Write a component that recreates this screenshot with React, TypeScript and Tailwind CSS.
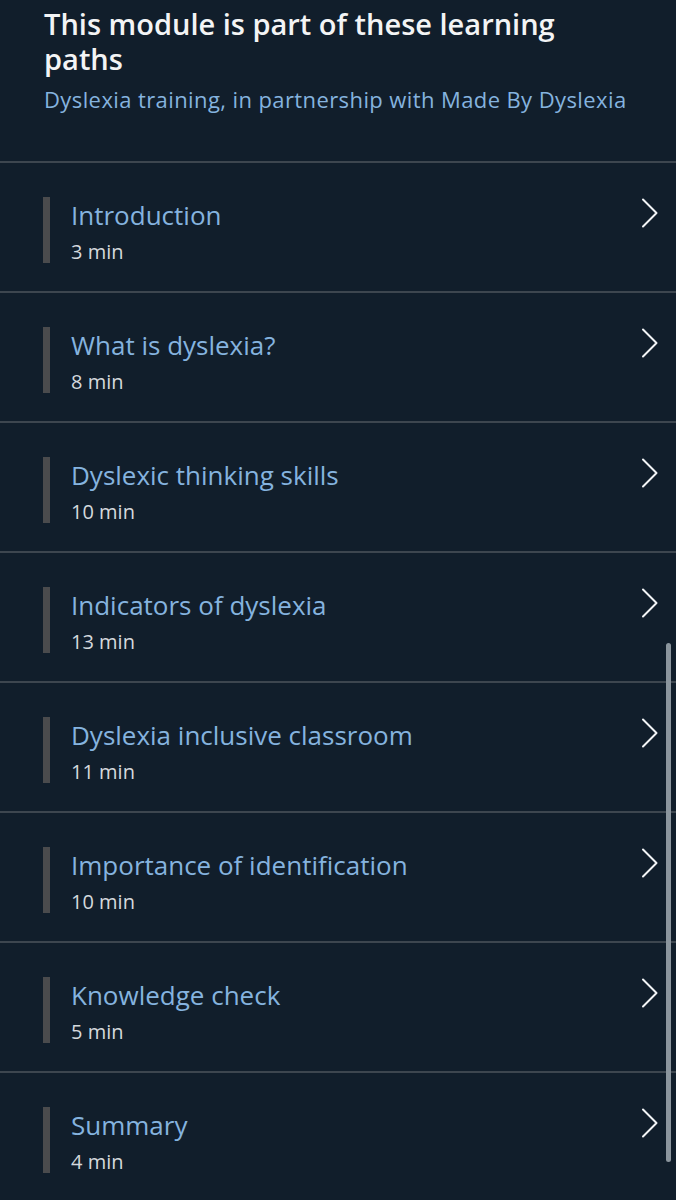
const units = [
  { title: 'Introduction', time: '3 min' },
  { title: 'What is dyslexia?', time: '8 min' },
  { title: 'Dyslexic thinking skills', time: '10 min' },
  { title: 'Indicators of dyslexia', time: '13 min' },
  { title: 'Dyslexia inclusive classroom', time: '11 min' },
  { title: 'Importance of identification', time: '10 min' },
  { title: 'Knowledge check', time: '5 min' },
  { title: 'Summary', time: '4 min' },
];

function Chevron() {
  return (
    <svg width="18" height="30" viewBox="0 0 18 30" fill="none" className="mt-[1px]">
      <path d="M2 1.5 L15.5 15 L2 28.5" stroke="#f2f4f6" strokeWidth="2" strokeLinecap="round" strokeLinejoin="round" />
    </svg>
  );
}

function UnitRow({ title, time }: { title: string; time: string }) {
  return (
    <div className="h-[130px] border-b-2 border-[#3d464f]">
      <div className="flex items-start pl-[43px] pr-[17px] pt-[34px]">
        <div className="h-[66px] w-[7px] bg-[#4a4b4d]" />
        <div className="flex-1 pl-[21px] pt-[2px]">
          <div className="text-[26px] leading-[32px] text-[#85b3df]">{title}</div>
          <div className="mt-[7px] text-[20px] leading-[28px] text-[#d5d9dd]">{time}</div>
        </div>
        <Chevron />
      </div>
    </div>
  );
}

export default function App() {
  return (
    <div
      className="relative min-h-[1200px] w-[676px] overflow-hidden bg-[#111e2b]"
      style={{ fontFamily: '"Open Sans", "Noto Sans", sans-serif' }}
    >
      <div className="px-[44px] pt-[6px] pb-[47px]">
        <h1 className="text-[29px] font-semibold leading-[35px] text-[#f3f4f5]">
          This module is part of these learning paths
        </h1>
        <p className="mt-[8px] text-[22px] leading-[30px] tracking-[0.4px] text-[#85b3df]">
          Dyslexia training, in partnership with Made By Dyslexia
        </p>
      </div>
      <div className="border-t-2 border-[#3d464f]">
        {units.map((u) => (
          <UnitRow key={u.title} title={u.title} time={u.time} />
        ))}
      </div>
      {/* scrollbar thumb */}
      <div className="absolute left-[666px] top-[643px] h-[519px] w-[5px] rounded-full bg-[#8b959d]" />
    </div>
  );
}
